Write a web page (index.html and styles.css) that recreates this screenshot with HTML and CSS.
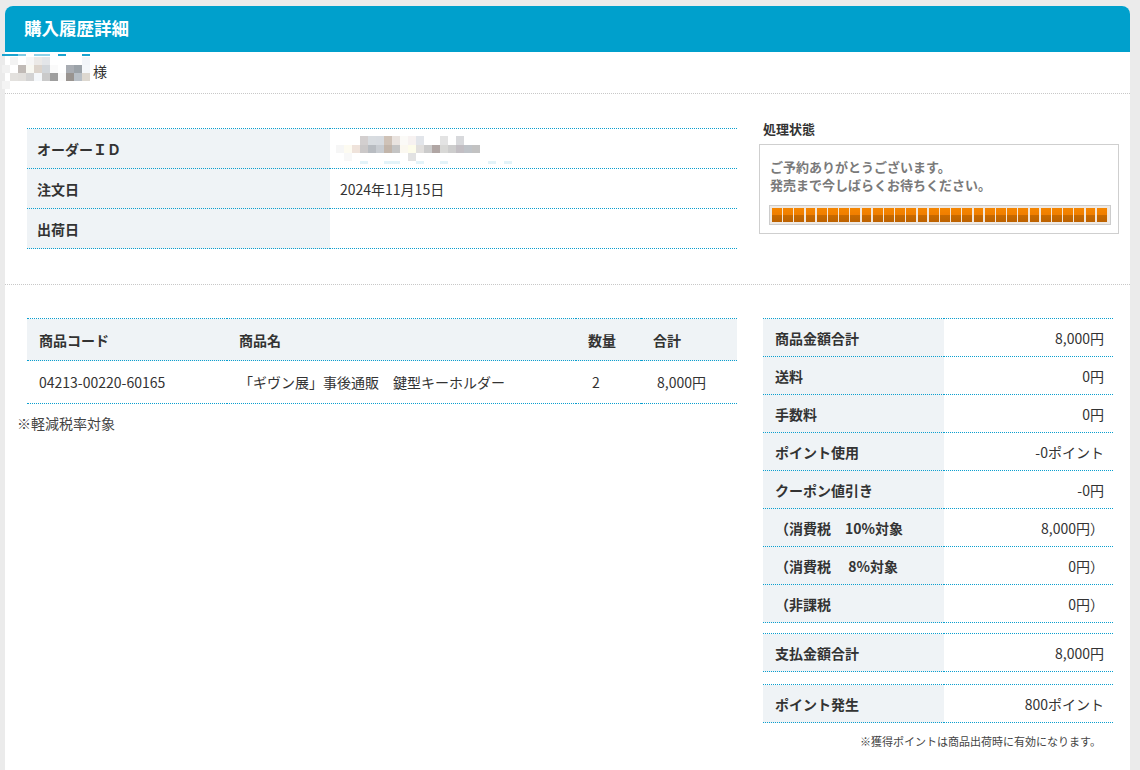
FILE: index.html
```html
<!DOCTYPE html>
<html lang="ja">
<head>
  <meta charset="UTF-8">
  <title>購入履歴詳細</title>
  <link rel="stylesheet" href="styles.css">
</head>
<body>
  <div class="panel">
    <h1 class="panel-title">購入履歴詳細</h1>

    <div class="customer">
      <svg class="mosaic mosaic-name" width="88" height="36" viewBox="0 0 88 36">
        <rect x="0" y="0" width="16" height="2" fill="#1aa3cf"/>
        <rect x="16" y="0" width="8" height="2" fill="#7fcbe4"/>
        <rect x="32" y="0" width="16" height="2" fill="#8fd2e8"/>
        <rect x="56" y="0" width="8" height="2" fill="#1aa3cf"/>
        <rect x="80" y="0" width="8" height="2" fill="#1aa3cf"/>
        <rect x="8" y="3" width="8" height="8" fill="#f3f3f3"/>
        <rect x="24" y="3" width="8" height="8" fill="#f6f6f6"/>
        <rect x="32" y="3" width="8" height="8" fill="#ebe9e7"/>
        <rect x="40" y="3" width="8" height="8" fill="#e3e5e8"/>
        <rect x="80" y="3" width="8" height="8" fill="#f2f5f9"/>
        <rect x="0" y="11" width="8" height="8" fill="#f1f1f1"/>
        <rect x="16" y="11" width="8" height="8" fill="#c0bab6"/>
        <rect x="24" y="11" width="8" height="8" fill="#f8f8f2"/>
        <rect x="32" y="11" width="8" height="8" fill="#dcd4cc"/>
        <rect x="40" y="11" width="8" height="8" fill="#d2d6da"/>
        <rect x="48" y="11" width="8" height="8" fill="#fafafa"/>
        <rect x="64" y="11" width="8" height="8" fill="#a9adb3"/>
        <rect x="72" y="11" width="8" height="8" fill="#9ba2a8"/>
        <rect x="80" y="11" width="8" height="8" fill="#f4f7fa"/>
        <rect x="8" y="19" width="8" height="8" fill="#e3e1de"/>
        <rect x="16" y="19" width="8" height="8" fill="#e1dfdc"/>
        <rect x="24" y="19" width="8" height="8" fill="#d3d3d3"/>
        <rect x="32" y="19" width="8" height="8" fill="#f4f7fa"/>
        <rect x="40" y="19" width="8" height="8" fill="#cacaca"/>
        <rect x="48" y="19" width="8" height="8" fill="#9e9e9e"/>
        <rect x="56" y="19" width="8" height="8" fill="#fafafa"/>
        <rect x="64" y="19" width="8" height="8" fill="#999490"/>
        <rect x="72" y="19" width="8" height="8" fill="#b8bfc6"/>
        <rect x="80" y="19" width="8" height="8" fill="#ddd8d0"/>
        <rect x="0" y="27" width="8" height="8" fill="#f4f4f4"/>
      </svg>
      <span class="customer-suffix">様</span>
    </div>

    <section class="section section-order">
      <div class="col-main">
        <table class="info-table">
          <tr>
            <th>オーダーＩＤ</th>
            <td>
              <svg class="mosaic" width="176" height="30" viewBox="0 0 176 30">
                <rect x="24" y="2" width="8" height="9" fill="#d3cfcf"/>
                <rect x="32" y="2" width="8" height="9" fill="#d8dce0"/>
                <rect x="40" y="2" width="8" height="9" fill="#d7dbe0"/>
                <rect x="48" y="2" width="8" height="9" fill="#cfc2b7"/>
                <rect x="56" y="2" width="8" height="9" fill="#e9e3df"/>
                <rect x="64" y="2" width="8" height="9" fill="#fbfaf7"/>
                <rect x="72" y="2" width="8" height="9" fill="#f7f2f1"/>
                <rect x="80" y="2" width="8" height="9" fill="#e2e5ea"/>
                <rect x="104" y="2" width="8" height="9" fill="#e3e3e3"/>
                <rect x="120" y="2" width="8" height="9" fill="#d8d9dc"/>
                <rect x="0" y="11" width="8" height="8" fill="#f6f6f6"/>
                <rect x="8" y="11" width="8" height="8" fill="#fdfbf1"/>
                <rect x="16" y="11" width="8" height="8" fill="#efe3db"/>
                <rect x="24" y="11" width="8" height="8" fill="#cbc8c8"/>
                <rect x="32" y="11" width="8" height="8" fill="#b8bcc1"/>
                <rect x="40" y="11" width="8" height="8" fill="#c8ccd1"/>
                <rect x="48" y="11" width="8" height="8" fill="#c2b5aa"/>
                <rect x="56" y="11" width="8" height="8" fill="#c4c4c4"/>
                <rect x="64" y="11" width="8" height="8" fill="#fbf8f0"/>
                <rect x="72" y="11" width="8" height="8" fill="#fdfcea"/>
                <rect x="80" y="11" width="8" height="8" fill="#e1dfdd"/>
                <rect x="88" y="11" width="8" height="8" fill="#cbcbcb"/>
                <rect x="96" y="11" width="8" height="8" fill="#b0a6a4"/>
                <rect x="104" y="11" width="8" height="8" fill="#d8d8d6"/>
                <rect x="112" y="11" width="8" height="8" fill="#cdcdcd"/>
                <rect x="120" y="11" width="8" height="8" fill="#c2bec3"/>
                <rect x="128" y="11" width="8" height="8" fill="#bfc3c8"/>
                <rect x="136" y="11" width="8" height="8" fill="#c2c2c2"/>
                <rect x="8" y="19" width="8" height="8" fill="#f8f8f8"/>
                <rect x="72" y="19" width="8" height="8" fill="#e2e2e2"/>
                <rect x="24" y="27" width="8" height="3" fill="#e3f3f9"/>
                <rect x="48" y="27" width="16" height="3" fill="#e3f3f9"/>
                <rect x="80" y="27" width="8" height="3" fill="#e3f3f9"/>
                <rect x="104" y="27" width="8" height="3" fill="#e3f3f9"/>
                <rect x="152" y="27" width="8" height="3" fill="#e3f3f9"/>
                <rect x="168" y="27" width="8" height="3" fill="#e3f3f9"/>
              </svg>
            </td>
          </tr>
          <tr>
            <th>注文日</th>
            <td>2024年11月15日</td>
          </tr>
          <tr>
            <th>出荷日</th>
            <td></td>
          </tr>
        </table>
      </div>

      <div class="col-side">
        <h2 class="status-title">処理状態</h2>
        <div class="status-box">
          <p class="status-text">ご予約ありがとうございます。<br>発売まで今しばらくお待ちください。</p>
          <div class="progress"><div class="progress-fill"></div></div>
        </div>
      </div>
    </section>

    <section class="section section-items">
      <div class="col-main">
        <table class="item-table">
          <thead>
            <tr>
              <th class="c-code">商品コード</th>
              <th class="c-name">商品名</th>
              <th class="c-qty">数量</th>
              <th class="c-total">合計</th>
            </tr>
          </thead>
          <tbody>
            <tr>
              <td class="c-code">04213-00220-60165</td>
              <td class="c-name">「ギヴン展」事後通販　鍵型キーホルダー</td>
              <td class="c-qty num">2</td>
              <td class="c-total num">8,000円</td>
            </tr>
          </tbody>
        </table>
        <p class="tax-note">※軽減税率対象</p>
      </div>

      <div class="col-side col-summary">
        <table class="sum-table">
          <tr><th>商品金額合計</th><td>8,000円</td></tr>
          <tr><th>送料</th><td>0円</td></tr>
          <tr><th>手数料</th><td>0円</td></tr>
          <tr><th>ポイント使用</th><td>-0ポイント</td></tr>
          <tr><th>クーポン値引き</th><td>-0円</td></tr>
          <tr><th>（消費税　10%対象</th><td>8,000円）</td></tr>
          <tr><th>（消費税　 8%対象</th><td>0円）</td></tr>
          <tr><th>（非課税</th><td>0円）</td></tr>
        </table>
        <table class="sum-table sum-total">
          <tr><th>支払金額合計</th><td>8,000円</td></tr>
        </table>
        <table class="sum-table sum-point">
          <tr><th>ポイント発生</th><td>800ポイント</td></tr>
        </table>
        <p class="point-note">※獲得ポイントは商品出荷時に有効になります。</p>
      </div>
    </section>
  </div>
</body>
</html>
```

FILE: styles.css
```css
body {
  margin: 0;
  background: #ebebeb;
  font-family: "Noto Sans CJK JP", "Noto Sans", sans-serif;
  font-size: 14px;
  color: #333;
}
.panel {
  margin: 6px 10px 0 5px;
  min-height: 764px;
  background: #fff;
  border-radius: 8px 8px 0 0;
}
.panel-title {
  margin: 0;
  height: 46px;
  padding-left: 19px;
  background: #00a0cc;
  border-radius: 8px 8px 0 0;
  color: #fff;
  font-size: 17.5px;
  font-weight: bold;
  line-height: 44px;
}
.customer {
  display: flex;
  align-items: flex-start;
  height: 41px;
  border-bottom: 1px dotted #c8c8c8;
}
.mosaic {
  display: block;
}
.mosaic-name {
  margin-left: -3px;
  margin-top: 2px;
}
.customer-suffix {
  margin-left: 3px;
  margin-top: 9px;
  line-height: 20px;
}
.section {
  display: flex;
  align-items: flex-start;
  padding: 34px 0 35px 22px;
  border-bottom: 1px dotted #c8c8c8;
}
.section-order {
  padding-top: 24px;
}
.col-main {
  width: 710px;
}
.col-side {
  width: 360px;
  margin-left: 22px;
}
table {
  border-collapse: collapse;
}
.info-table {
  width: 100%;
  margin-top: 10px;
}
.info-table th,
.info-table td {
  height: 39px;
  padding: 0 10px;
  border-top: 1px dotted #0a9fcf;
  border-bottom: 1px dotted #0a9fcf;
  text-align: left;
  line-height: 20px;
}
.info-table th {
  width: 283px;
  background: #eff3f6;
  font-weight: bold;
}
.info-table td .mosaic {
  margin-left: -4px;
}
.status-title {
  margin: 0 0 5px 4px;
  font-size: 13px;
  font-weight: bold;
  line-height: 21px;
}
.status-box {
  height: 90px;
  box-sizing: border-box;
  padding: 13px 7px 0 9px;
  border: 1px solid #cfcfcf;
}
.status-text {
  margin: 0 0 11px 1px;
  color: #7a7a7a;
  font-size: 13px;
  font-weight: bold;
  line-height: 18px;
}
.progress {
  height: 20px;
  box-sizing: border-box;
  padding: 2px;
  border: 1px solid #cccccc;
  background: #efe9e3;
}
.progress-fill {
  height: 100%;
  background:
    repeating-linear-gradient(90deg, transparent 0 9.8px, #f2e6da 9.8px 11.2px),
    linear-gradient(#f58600 0, #f07e00 48%, #c86a00 52%, #bd6200 100%);
}
.section-items {
  padding-top: 33px;
  border-bottom: none;
}
.item-table {
  width: 100%;
}
.item-table th,
.item-table td {
  padding: 0 12px;
  text-align: left;
  border-top: 1px dotted #0a9fcf;
  border-bottom: 1px dotted #0a9fcf;
  line-height: 20px;
}
.item-table th {
  height: 41px;
  background: #eff3f6;
  font-weight: bold;
}
.item-table td {
  height: 42px;
}
.item-table .c-code {
  width: 176px;
}
.item-table .c-name {
  width: 325px;
}
.item-table .c-qty {
  width: 37px;
}
.item-table td.num {
  padding-left: 16px;
}
.tax-note {
  margin: 9px 0 0 -10px;
  line-height: 20px;
  color: #444;
}
.col-summary {
  width: 350px;
  margin-left: 26px;
}
.sum-table {
  width: 100%;
}
.sum-table th,
.sum-table td {
  height: 37px;
  border-top: 1px dotted #0a9fcf;
  border-bottom: 1px dotted #0a9fcf;
  line-height: 20px;
}
.sum-table th {
  width: 169px;
  padding: 0 0 0 12px;
  background: #eff3f6;
  font-weight: bold;
  text-align: left;
  white-space: pre;
}
.sum-table td {
  padding: 0 9px 0 0;
  text-align: right;
}
.sum-total {
  margin-top: 10px;
}
.sum-point {
  margin-top: 12px;
}
.point-note {
  margin: 8px 12px 0 0;
  font-size: 11px;
  line-height: 20px;
  text-align: right;
  color: #444;
}
```
